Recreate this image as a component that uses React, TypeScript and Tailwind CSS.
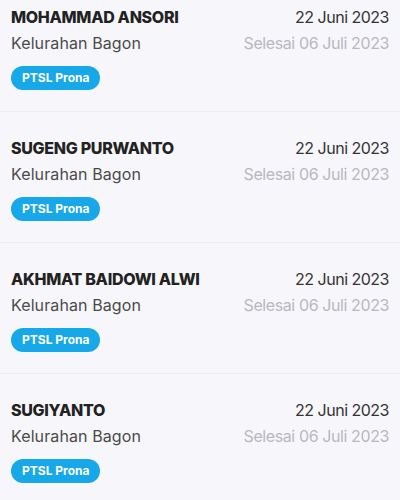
import React from 'react';

const items = [
  { name: 'MOHAMMAD ANSORI', kel: 'Kelurahan Bagon', date: '22 Juni 2023', done: 'Selesai 06 Juli 2023', tag: 'PTSL Prona' },
  { name: 'SUGENG PURWANTO', kel: 'Kelurahan Bagon', date: '22 Juni 2023', done: 'Selesai 06 Juli 2023', tag: 'PTSL Prona' },
  { name: 'AKHMAT BAIDOWI ALWI', kel: 'Kelurahan Bagon', date: '22 Juni 2023', done: 'Selesai 06 Juli 2023', tag: 'PTSL Prona' },
  { name: 'SUGIYANTO', kel: 'Kelurahan Bagon', date: '22 Juni 2023', done: 'Selesai 06 Juli 2023', tag: 'PTSL Prona' },
];

export default function App() {
  return (
    <div className="w-[400px] h-[500px] overflow-hidden bg-[#f7f7fb] font-['Inter',sans-serif]">
      {items.map((it, i) => (
        <div
          key={i}
          className={`px-[11px] pb-[21px] border-b border-[#ebebf0] ${i === 0 ? 'pt-[5px]' : 'pt-6'}`}
        >
          <div className="flex justify-between items-start">
            <div className="flex flex-col gap-[2px]">
              <span className="text-base leading-6 font-extrabold tracking-[-0.3px] text-[#222222]">{it.name}</span>
              <span className="text-base leading-6 tracking-[0.1px] text-[#4a4a4a]">{it.kel}</span>
            </div>
            <div className="flex flex-col gap-[2px] items-end">
              <span className="text-base leading-6 tracking-[-0.5px] text-[#333333]">{it.date}</span>
              <span className="text-base leading-6 tracking-[-0.4px] text-[#b8b8c0]">{it.done}</span>
            </div>
          </div>
          <div className="mt-[11px] flex">
            <span className="flex items-center h-6 px-[11px] rounded-full bg-[#17a8ea] text-white text-xs leading-none font-bold">
              {it.tag}
            </span>
          </div>
        </div>
      ))}
    </div>
  );
}
